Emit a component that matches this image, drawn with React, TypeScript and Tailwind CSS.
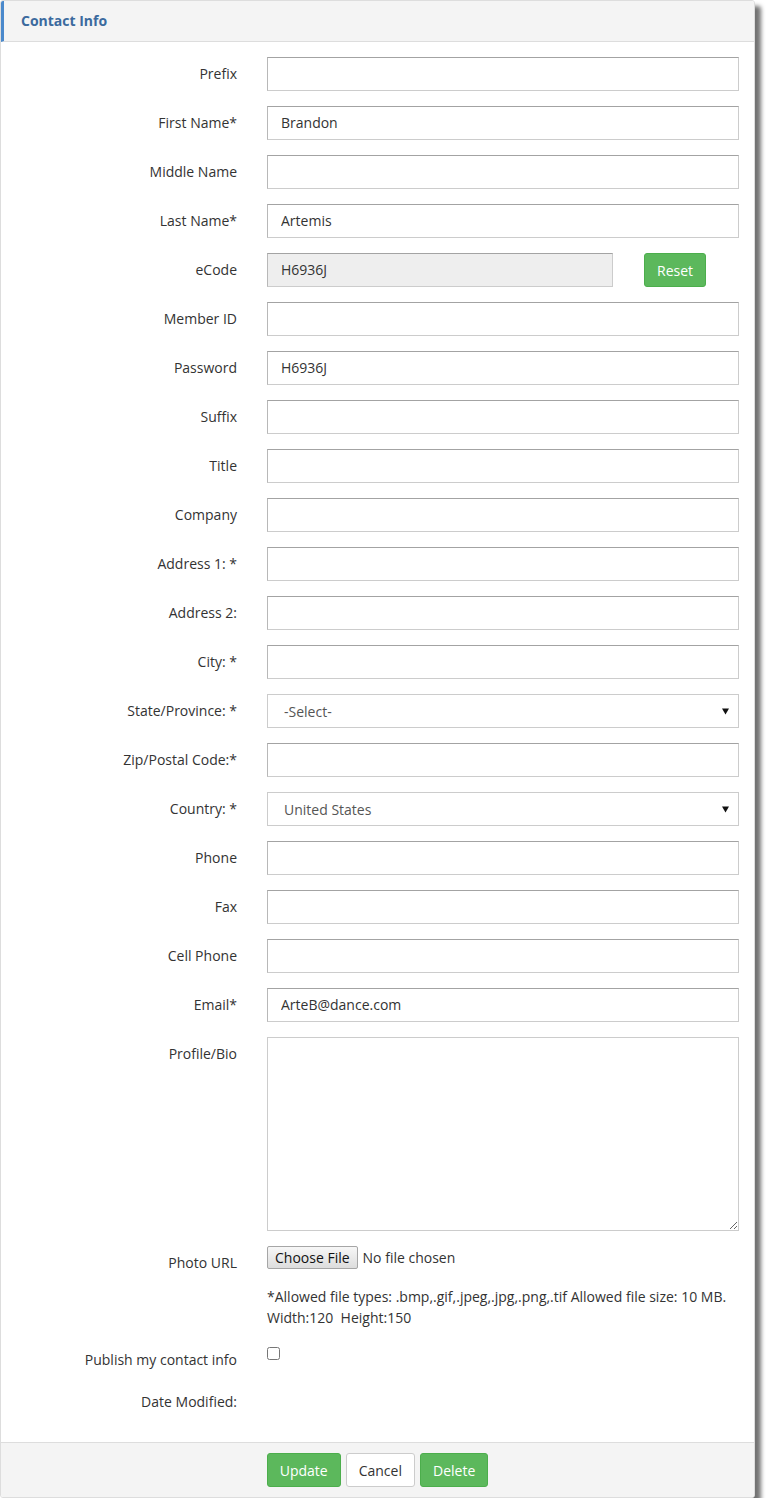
import { ReactNode } from "react";

const FONT = "font-['Open_Sans','Liberation_Sans',sans-serif]";

const INPUT_CLASS =
  "block h-[34px] w-full border border-[#cccccc] border-t-[#a3a3a3] border-l-[#b8b8b8] bg-white px-[13px] pb-[2px] text-[14px] text-[#333333] outline-none";

interface IFormRowProps {
  readonly label: string;
  readonly children?: ReactNode;
}

function FormRow({ label, children }: IFormRowProps) {
  return (
    <div className="mb-[15px] flex">
      <label className="w-[251px] shrink-0 pr-[15px] pt-[7px] text-right text-[14px] leading-[20px] text-[#333333]">
        {label}
      </label>
      <div className="min-w-0 flex-1 px-[15px]">{children}</div>
    </div>
  );
}

function TextRow({ label, value = "" }: { readonly label: string; readonly value?: string }) {
  return (
    <FormRow label={label}>
      <input type="text" defaultValue={value} className={INPUT_CLASS} />
    </FormRow>
  );
}

function SelectRow({ label, value }: { readonly label: string; readonly value: string }) {
  return (
    <FormRow label={label}>
      <div className="relative">
        <select
          defaultValue={value}
          className="block h-[34px] w-full appearance-none border border-[#cccccc] bg-white pl-[16px] text-[14px] text-[#555555] outline-none"
        >
          <option>{value}</option>
        </select>
        <svg
          className="pointer-events-none absolute right-[10px] top-[14px]"
          width="7"
          height="7"
          viewBox="0 0 7 7"
        >
          <path d="M0 0.5 L7 0.5 L3.5 6.5 Z" fill="#111111" />
        </svg>
      </div>
    </FormRow>
  );
}

export default function App() {
  return (
    <div className={`${FONT} bg-white`}>
      <div className="w-[755px] overflow-hidden rounded-[3px] border border-[#dddddd] bg-white shadow-[6px_6px_4px_rgba(0,0,0,0.55)]">
        <div className="border-b border-b-[#dddddd] border-l-[3px] border-l-[#4a89cc] bg-[#f4f4f4] py-[10px] pl-[17px]">
          <h3 className="text-[14px] font-bold leading-[20px] text-[#3b6a9e]">Contact Info</h3>
        </div>

        <div className="pb-[15px] pt-[15px]">
          <TextRow label="Prefix" />
          <TextRow label="First Name*" value="Brandon" />
          <TextRow label="Middle Name" />
          <TextRow label="Last Name*" value="Artemis" />
          <FormRow label="eCode">
            <div className="flex items-center">
              <input
                type="text"
                readOnly
                defaultValue="H6936J"
                className="block h-[34px] w-[346px] border border-[#cccccc] border-t-[#a3a3a3] border-l-[#b8b8b8] bg-[#eeeeee] px-[13px] pb-[2px] text-[14px] text-[#333333] outline-none"
              />
              <button
                type="button"
                className="ml-[31px] h-[34px] rounded-[3px] border border-[#4cae4c] bg-[#5cb85c] px-[12px] text-[14px] text-white"
              >
                Reset
              </button>
            </div>
          </FormRow>
          <TextRow label="Member ID" />
          <TextRow label="Password" value="H6936J" />
          <TextRow label="Suffix" />
          <TextRow label="Title" />
          <TextRow label="Company" />
          <TextRow label="Address 1: *" />
          <TextRow label="Address 2:" />
          <TextRow label="City: *" />
          <SelectRow label="State/Province: *" value="-Select-" />
          <TextRow label="Zip/Postal Code:*" />
          <SelectRow label="Country: *" value="United States" />
          <TextRow label="Phone" />
          <TextRow label="Fax" />
          <TextRow label="Cell Phone" />
          <TextRow label="Email*" value="ArteB@dance.com" />
          <FormRow label="Profile/Bio">
            <textarea className="block h-[194px] w-full border border-[#cccccc] bg-white px-[13px] py-[6px] text-[14px] text-[#333333] outline-none" />
          </FormRow>
          <FormRow label="Photo URL">
            <div className="flex items-center">
              <span className="flex h-[23px] items-center rounded-[2px] border border-[#a6a6a6] bg-gradient-to-b from-[#f7f7f7] to-[#dddddd] px-[7px] text-[14px] text-[#111111]">
                Choose File
              </span>
              <span className="ml-[5px] text-[14px] text-[#333333]">No file chosen</span>
            </div>
            <p className="mt-[17px] text-[14px] leading-[21px] text-[#333333]">
              *Allowed file types: .bmp,.gif,.jpeg,.jpg,.png,.tif Allowed file size: 10 MB.
              <br />
              Width:120&nbsp;&nbsp;Height:150
            </p>
          </FormRow>
          <FormRow label="Publish my contact info">
            <input type="checkbox" className="mt-[4px] block h-[13px] w-[13px]" />
          </FormRow>
          <FormRow label="Date Modified:" />
        </div>

        <div className="flex justify-center gap-[5px] border-t border-t-[#dddddd] bg-[#f4f4f4] py-[10px]">
          <button
            type="button"
            className="h-[34px] rounded-[3px] border border-[#4cae4c] bg-[#5cb85c] px-[12px] text-[14px] text-white"
          >
            Update
          </button>
          <button
            type="button"
            className="h-[34px] rounded-[3px] border border-[#cccccc] bg-white px-[12px] text-[14px] text-[#333333]"
          >
            Cancel
          </button>
          <button
            type="button"
            className="h-[34px] rounded-[3px] border border-[#4cae4c] bg-[#5cb85c] px-[12px] text-[14px] text-white"
          >
            Delete
          </button>
        </div>
      </div>
    </div>
  );
}
